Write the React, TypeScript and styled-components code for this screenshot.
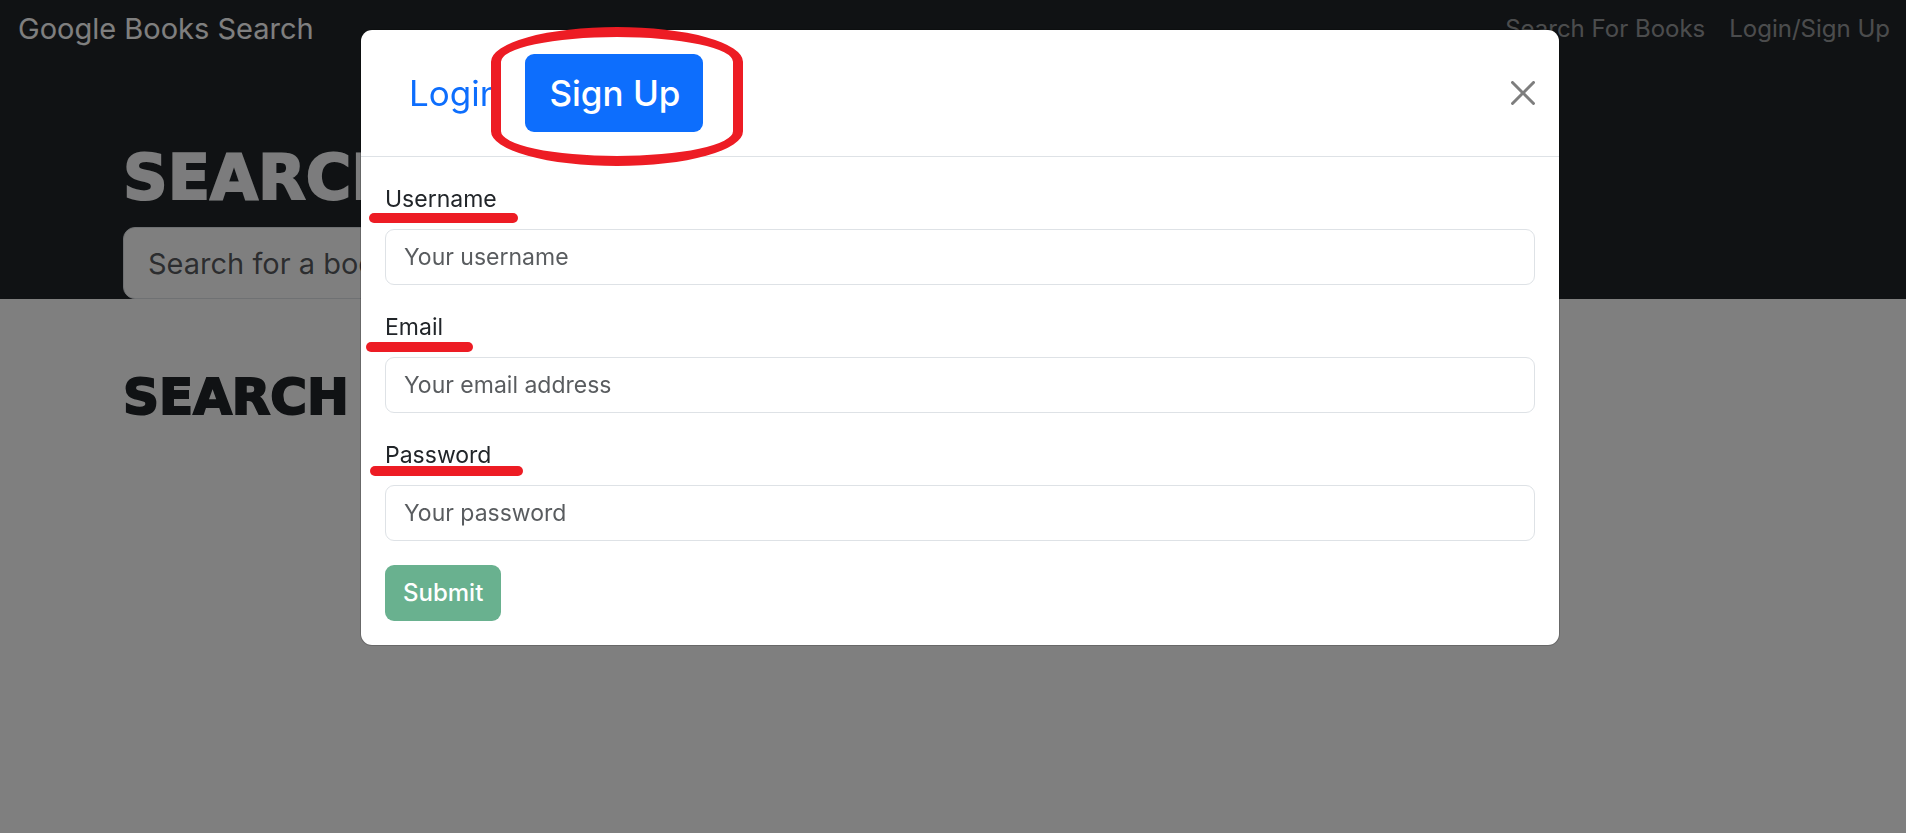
import React, { useState } from "react";
import styled, { createGlobalStyle } from "styled-components";

const GlobalStyle = createGlobalStyle`
  *, *::before, *::after { box-sizing: border-box; }
  html, body, #root { height: 100%; }
  body {
    margin: 0;
    overflow: hidden;
    background: #fff;
    color: #212529;
    font-family: Inter, Roboto, "Liberation Sans", sans-serif;
    font-size: 24px;
    line-height: 36px;
  }
  button, input { font: inherit; }
`;

const Navbar = styled.nav`
  display: flex;
  align-items: center;
  justify-content: space-between;
  padding: 6px 16px 6px 18px;
  background: #212529;
`;

const Brand = styled.a`
  color: #fff;
  font-size: 29px;
  line-height: 46px;
  text-decoration: none;
`;

const NavLinks = styled.div`
  display: flex;
  gap: 24px;
`;

const NavLink = styled.a`
  color: rgba(255, 255, 255, 0.55);
  text-decoration: none;
`;

const Hero = styled.header`
  padding: 84px 123px 0;
  background: #212529;
  color: #f8f9fa;
`;

const Title = styled.h1`
  margin: 0 0 13px;
  font-family: "DejaVu Sans", Verdana, sans-serif;
  font-size: 62px;
  font-weight: 900;
  line-height: 72px;
  text-transform: uppercase;
  -webkit-text-stroke: 2px currentColor;
`;

const SearchInput = styled.input`
  display: block;
  width: 66%;
  height: 72px;
  padding: 12px 24px;
  border: 1px solid #dee2e6;
  border-radius: 12px;
  background: #fff;
  font-size: 29px;

  &::placeholder { color: rgba(33, 37, 41, 0.75); opacity: 1; }
`;

const Results = styled.main`
  padding: 70px 123px 0;
`;

const Subtitle = styled.h2`
  margin: 0;
  font-family: "DejaVu Sans", Verdana, sans-serif;
  font-size: 50px;
  font-weight: 900;
  line-height: 56px;
  text-transform: uppercase;
  -webkit-text-stroke: 2px currentColor;
`;

const Backdrop = styled.div`
  position: fixed;
  inset: 0;
  padding: 29px 0 29px 14px;
  overflow: hidden;
  background: rgba(0, 0, 0, 0.5);
`;

const Dialog = styled.section`
  position: relative;
  max-width: 1200px;
  margin: 0 auto;
  border: 1px solid rgba(0, 0, 0, 0.18);
  border-radius: 12px;
  background: #fff;
  background-clip: padding-box;
`;

const DialogHeader = styled.div`
  display: flex;
  align-items: center;
  justify-content: space-between;
  padding: 24px;
  border-bottom: 1px solid #dee2e6;
`;

const Tabs = styled.div`
  display: flex;
  gap: 2px;
`;

const Tab = styled.button<{ $active: boolean }>`
  padding: 12px 23px 12px 24px;
  border: 0;
  border-radius: 9px;
  background: ${(p) => (p.$active ? "#0d6efd" : "transparent")};
  color: ${(p) => (p.$active ? "#fff" : "#0d6efd")};
  font-size: 35px;
  font-weight: ${(p) => (p.$active ? 500 : 400)};
  line-height: 54px;
`;

const TabSlot = styled.div`
  position: relative;
`;

const Ring = styled.span`
  position: absolute;
  top: -27px;
  left: -34px;
  width: 252px;
  height: 139px;
  border: 10px solid #ed1c24;
  border-radius: 50% / 25%;
  pointer-events: none;
`;

const CloseButton = styled.button`
  display: flex;
  padding: 0;
  border: 0;
  background: none;
  color: #000;
  opacity: 0.5;
`;

const Form = styled.form`
  display: flex;
  flex-direction: column;
  align-items: flex-start;
  gap: 24px;
  padding: 24px;
`;

const Field = styled.div`
  position: relative;
  display: flex;
  flex-direction: column;
  gap: 12px;
  width: 100%;
`;

const Label = styled.label`
  font-size: 23px;
`;

const Underline = styled.span<{ $left: number; $top: number; $width: number }>`
  position: absolute;
  left: ${(p) => p.$left}px;
  top: ${(p) => p.$top}px;
  width: ${(p) => p.$width}px;
  height: 10px;
  border-radius: 5px;
  background: #ed1c24;
  pointer-events: none;
`;

const TextInput = styled.input`
  width: 100%;
  height: 56px;
  padding: 9px 18px;
  border: 1px solid #dee2e6;
  border-radius: 9px;
  background: #fff;
  color: #212529;
  font-size: 23px;

  &::placeholder { color: rgba(33, 37, 41, 0.75); opacity: 1; }
`;

const Submit = styled.button`
  height: 56px;
  padding: 9px 18px;
  border: 0;
  border-radius: 9px;
  background: #198754;
  color: #fff;
  font-weight: 500;

  &:disabled { opacity: 0.65; }
`;

const fields = [
  { id: "username", label: "Username", type: "text", hint: "Your username", mark: { $left: -16, $top: 32, $width: 149 } },
  { id: "email", label: "Email", type: "email", hint: "Your email address", mark: { $left: -19, $top: 33, $width: 107 } },
  { id: "password", label: "Password", type: "password", hint: "Your password", mark: { $left: -15, $top: 29, $width: 153 } },
];

export default function App() {
  const [tab, setTab] = useState("signup");
  return (
    <>
      <GlobalStyle />
      <Navbar>
        <Brand href="#">Google Books Search</Brand>
        <NavLinks>
          <NavLink href="#">Search For Books</NavLink>
          <NavLink href="#">Login/Sign Up</NavLink>
        </NavLinks>
      </Navbar>
      <Hero>
        <Title>Search</Title>
        <SearchInput type="text" aria-label="Search for a book" placeholder="Search for a book" />
      </Hero>
      <Results>
        <Subtitle>Search</Subtitle>
      </Results>
      <Backdrop>
        <Dialog role="dialog" aria-modal="true" aria-label="Sign Up">
          <DialogHeader>
            <Tabs role="tablist">
              <Tab type="button" role="tab" aria-selected={tab === "login"} $active={tab === "login"} onClick={() => setTab("login")}>
                Login
              </Tab>
              <TabSlot>
                <Tab type="button" role="tab" aria-selected={tab === "signup"} $active={tab === "signup"} onClick={() => setTab("signup")}>
                  Sign Up
                </Tab>
                <Ring />
              </TabSlot>
            </Tabs>
            <CloseButton type="button" aria-label="Close">
              <svg width="24" height="24" viewBox="0 0 16 16" fill="currentColor" aria-hidden="true">
                <path d="M.293.293a1 1 0 0 1 1.414 0L8 6.586 14.293.293a1 1 0 1 1 1.414 1.414L9.414 8l6.293 6.293a1 1 0 0 1-1.414 1.414L8 9.414l-6.293 6.293a1 1 0 0 1-1.414-1.414L6.586 8 .293 1.707a1 1 0 0 1 0-1.414z" />
              </svg>
            </CloseButton>
          </DialogHeader>
          <Form onSubmit={(e) => e.preventDefault()}>
            {fields.map((f) => (
              <Field key={f.id}>
                <Label htmlFor={f.id}>{f.label}</Label>
                <TextInput id={f.id} type={f.type} placeholder={f.hint} />
                <Underline {...f.mark} />
              </Field>
            ))}
            <Submit type="submit" disabled>
              Submit
            </Submit>
          </Form>
        </Dialog>
      </Backdrop>
    </>
  );
}
